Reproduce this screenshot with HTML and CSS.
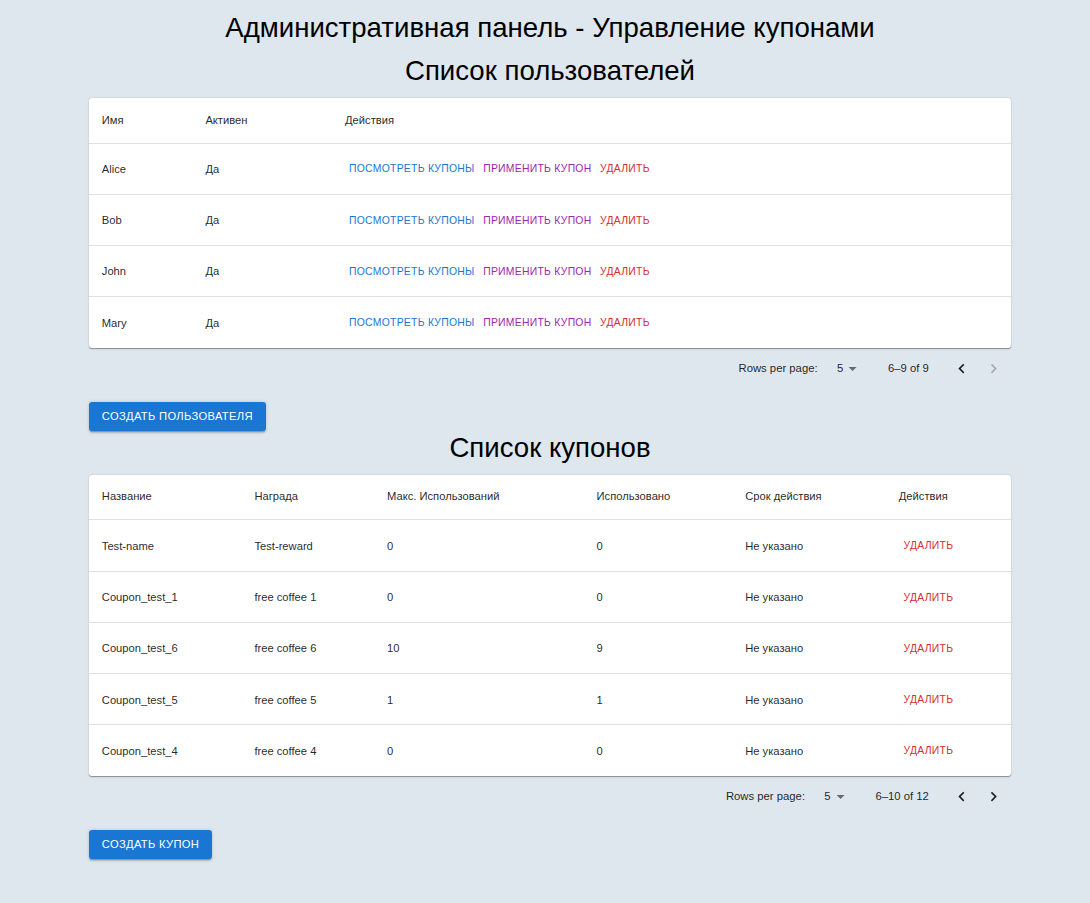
FILE: index.html
```html
<!DOCTYPE html>
<html lang="ru">
<head>
<meta charset="utf-8">
<title>Административная панель</title>
<link rel="stylesheet" href="styles.css">
</head>
<body>
<div class="page">
  <h1 class="title">Административная панель - Управление купонами</h1>
  <h2 class="title">Список пользователей</h2>
  <div class="card">
    <table class="tbl users">
      <thead>
        <tr><th class="u-name">Имя</th><th class="u-active">Активен</th><th>Действия</th></tr>
      </thead>
      <tbody>
        <tr><td>Alice</td><td>Да</td><td><span class="btn blue">Посмотреть купоны</span><span class="btn purple">Применить купон</span><span class="btn red">Удалить</span></td></tr>
        <tr><td>Bob</td><td>Да</td><td><span class="btn blue">Посмотреть купоны</span><span class="btn purple">Применить купон</span><span class="btn red">Удалить</span></td></tr>
        <tr><td>John</td><td>Да</td><td><span class="btn blue">Посмотреть купоны</span><span class="btn purple">Применить купон</span><span class="btn red">Удалить</span></td></tr>
        <tr class="last"><td>Mary</td><td>Да</td><td><span class="btn blue">Посмотреть купоны</span><span class="btn purple">Применить купон</span><span class="btn red">Удалить</span></td></tr>
      </tbody>
    </table>
  </div>
  <div class="pager">
    <span class="pager-label">Rows per page:</span>
    <span class="pager-select"><span class="sel-val">5</span><svg class="sel-icon" viewBox="0 0 24 24"><path d="M7 10l5 5 5-5z"/></svg></span>
    <span class="pager-rows">6–9 of 9</span>
    <span class="pager-actions">
      <span class="icon-btn"><svg viewBox="0 0 24 24"><path d="M15.41 16.59 10.83 12l4.58-4.59L14 6l-6 6 6 6 1.41-1.41z"/></svg></span>
      <span class="icon-btn disabled"><svg viewBox="0 0 24 24"><path d="M8.59 16.59 13.17 12 8.59 7.41 10 6l6 6-6 6-1.41-1.41z"/></svg></span>
    </span>
  </div>
  <div class="actions-row"><span class="cbtn">Создать пользователя</span></div>

  <h2 class="title">Список купонов</h2>
  <div class="card">
    <table class="tbl coupons">
      <thead>
        <tr><th class="c1">Название</th><th class="c2">Награда</th><th class="c3">Макс. Использований</th><th class="c4">Использовано</th><th class="c5">Срок действия</th><th>Действия</th></tr>
      </thead>
      <tbody>
        <tr><td>Test-name</td><td>Test-reward</td><td>0</td><td>0</td><td>Не указано</td><td><span class="btn red">Удалить</span></td></tr>
        <tr><td>Coupon_test_1</td><td>free coffee 1</td><td>0</td><td>0</td><td>Не указано</td><td><span class="btn red">Удалить</span></td></tr>
        <tr><td>Coupon_test_6</td><td>free coffee 6</td><td>10</td><td>9</td><td>Не указано</td><td><span class="btn red">Удалить</span></td></tr>
        <tr><td>Coupon_test_5</td><td>free coffee 5</td><td>1</td><td>1</td><td>Не указано</td><td><span class="btn red">Удалить</span></td></tr>
        <tr class="last"><td>Coupon_test_4</td><td>free coffee 4</td><td>0</td><td>0</td><td>Не указано</td><td><span class="btn red">Удалить</span></td></tr>
      </tbody>
    </table>
  </div>
  <div class="pager">
    <span class="pager-label">Rows per page:</span>
    <span class="pager-select"><span class="sel-val">5</span><svg class="sel-icon" viewBox="0 0 24 24"><path d="M7 10l5 5 5-5z"/></svg></span>
    <span class="pager-rows">6–10 of 12</span>
    <span class="pager-actions">
      <span class="icon-btn"><svg viewBox="0 0 24 24"><path d="M15.41 16.59 10.83 12l4.58-4.59L14 6l-6 6 6 6 1.41-1.41z"/></svg></span>
      <span class="icon-btn"><svg viewBox="0 0 24 24"><path d="M8.59 16.59 13.17 12 8.59 7.41 10 6l6 6-6 6-1.41-1.41z"/></svg></span>
    </span>
  </div>
  <div class="actions-row"><span class="cbtn">Создать купон</span></div>
</div>
</body>
</html>
```
FILE: styles.css
```css
html, body {
  margin: 0;
  padding: 0;
  background: #dee6ee;
}
body {
  font-family: "Liberation Sans", Arial, sans-serif;
  color: rgba(0, 0, 0, 0.87);
}
.page {
  padding: 11px 79px 40px 89px;
}
.title {
  margin: 0 0 9.3px 0;
  font-size: 27.6px;
  line-height: 34.1px;
  font-weight: 400;
  text-align: center;
  color: #000;
}
.card {
  background: #fff;
  border-radius: 3.2px;
  box-shadow: 0 1.6px 0.8px -0.8px rgba(0,0,0,0.2), 0 0.8px 0.8px 0 rgba(0,0,0,0.14), 0 0.8px 2.4px 0 rgba(0,0,0,0.12);
  overflow: hidden;
}
.tbl {
  width: 100%;
  border-collapse: collapse;
  font-size: 11.2px;
}
.tbl th, .tbl td {
  text-align: left;
  padding: 12.8px;
  border-bottom: 1px solid #e0e0e0;
  vertical-align: middle;
  color: rgba(0, 0, 0, 0.87);
}
.tbl th {
  font-weight: 400;
  line-height: 19.2px;
}
.tbl td {
  height: 24.65px;
  line-height: 19.2px;
  padding-top: 13.6px;
  padding-bottom: 12px;
}
.tbl tr.last td {
  border-bottom: none;
}
.users .u-name { width: 78px; }
.users .u-active { width: 114px; }
.coupons .c1 { width: 127px; }
.coupons .c2 { width: 107px; }
.coupons .c3 { width: 184px; }
.coupons .c4 { width: 123px; }
.coupons .c5 { width: 128px; }
.btn {
  display: inline-block;
  font-size: 10.4px;
  line-height: 18.2px;
  padding: 3.2px 4px;
  margin-right: 0.6px;
  text-transform: uppercase;
  letter-spacing: 0.27px;
  vertical-align: middle;
}
.coupons .btn {
  padding-left: 4.8px;
}
.blue { color: #1976d2; }
.purple { color: #9c27b0; }
.red { color: #d32f2f; }
.pager {
  display: flex;
  justify-content: flex-end;
  align-items: center;
  height: 41.6px;
  padding-right: 1.6px;
  font-size: 11.3px;
  color: rgba(0, 0, 0, 0.87);
}
.pager-label {
  line-height: 16px;
}
.pager-select {
  position: relative;
  display: inline-flex;
  justify-content: flex-end;
  min-width: 12.8px;
  padding: 0 19.2px 0 6.4px;
  margin: 0 25.6px 0 6.4px;
  line-height: 16px;
}
.sel-val {
  min-width: 12.8px;
  text-align: right;
}
.sel-icon {
  position: absolute;
  right: 0;
  top: 50%;
  width: 19.2px;
  height: 19.2px;
  margin-top: -9.6px;
  fill: rgba(0, 0, 0, 0.54);
}
.pager-rows {
  line-height: 16px;
}
.pager-actions {
  display: flex;
  margin-left: 16.6px;
}
.icon-btn {
  display: flex;
  align-items: center;
  justify-content: center;
  width: 32px;
  height: 32px;
}
.icon-btn svg {
  width: 19.2px;
  height: 19.2px;
  fill: rgba(0, 0, 0, 0.87);
}
.icon-btn.disabled svg {
  fill: rgba(0, 0, 0, 0.26);
}
.actions-row {
  display: flex;
  margin-top: 13px;
}
.cbtn {
  display: inline-block;
  background: #1976d2;
  color: #fff;
  font-size: 11.2px;
  line-height: 19.6px;
  padding: 4.8px 12.8px;
  border-radius: 3.2px;
  text-transform: uppercase;
  letter-spacing: 0.32px;
  box-shadow: 0 2.4px 0.8px -1.6px rgba(0,0,0,0.2), 0 1.6px 1.6px 0 rgba(0,0,0,0.14), 0 0.8px 4px 0 rgba(0,0,0,0.12);
}
```
